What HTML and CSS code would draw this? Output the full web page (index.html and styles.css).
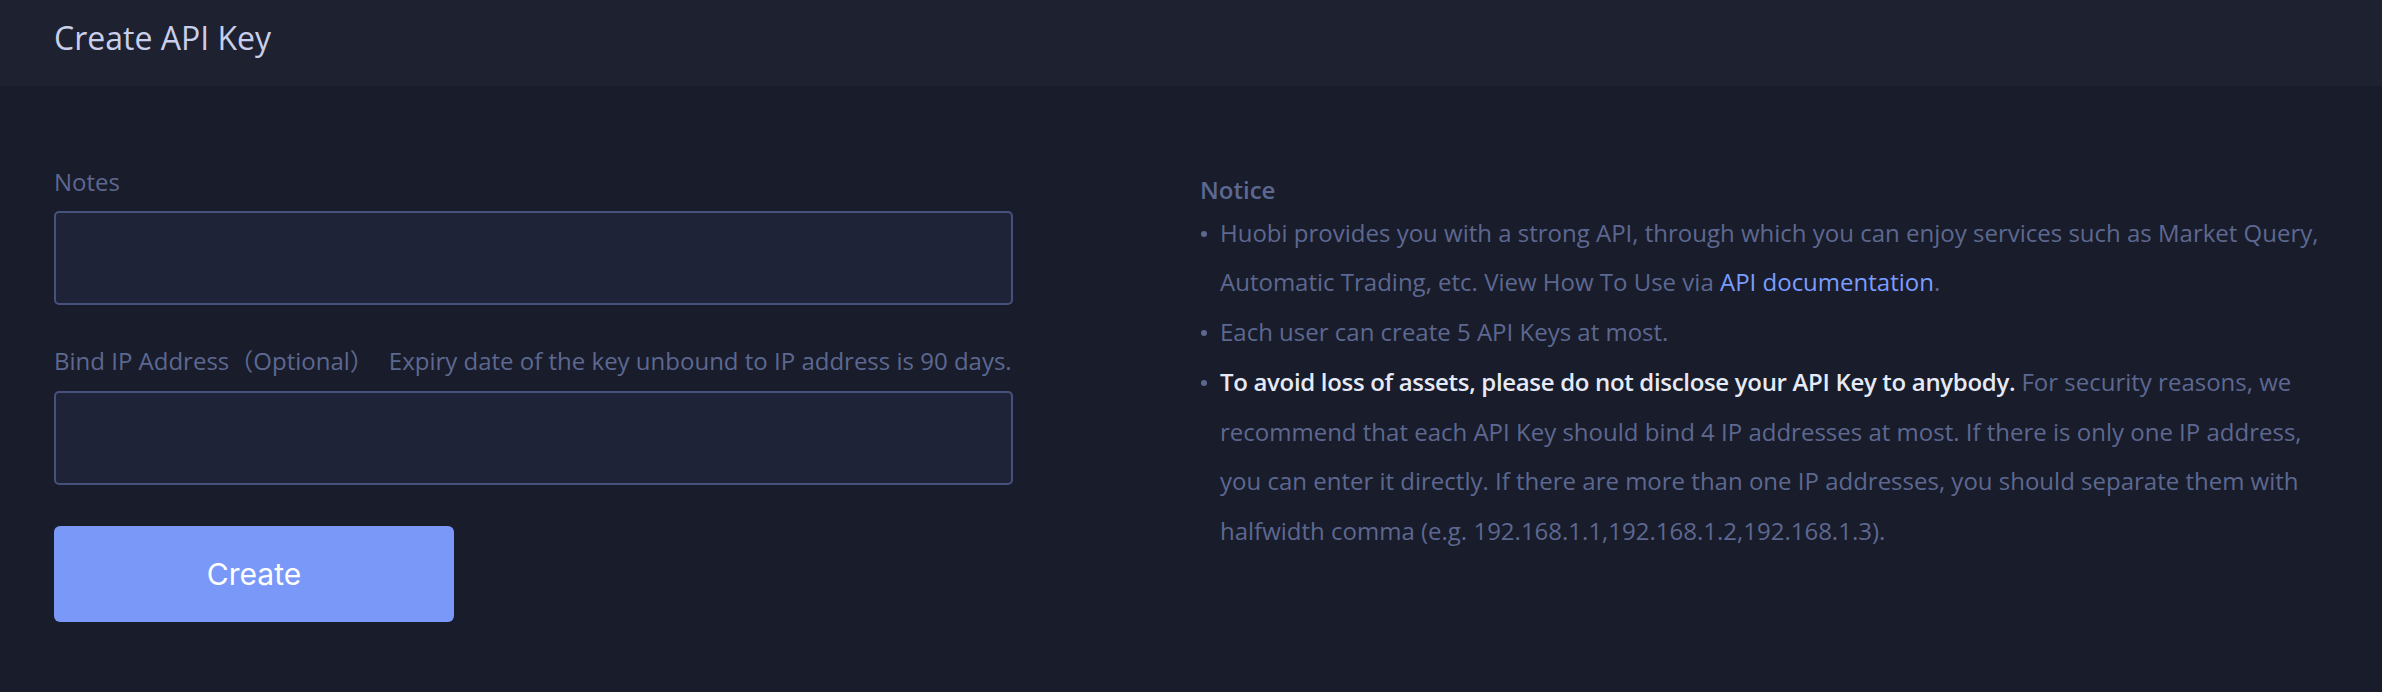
FILE: index.html
```html
<!DOCTYPE html>
<html lang="en">
<head>
<meta charset="utf-8">
<title>Create API Key</title>
<link rel="stylesheet" href="styles.css">
</head>
<body>
<header class="page-header">
  <h1 class="page-title">Create API Key</h1>
</header>
<main class="content">
  <form class="form-col">
    <label class="field-label" for="notes">Notes</label>
    <input class="field-input" id="notes" type="text">
    <label class="field-label field-label--ip" for="ip">Bind IP Address（Optional）<span class="field-hint">Expiry date of the key unbound to IP address is 90 days.</span></label>
    <input class="field-input" id="ip" type="text">
    <button class="btn-create" type="button">Create</button>
  </form>
  <section class="notice">
    <h2 class="notice-title">Notice</h2>
    <ul class="notice-list">
      <li class="notice-item">Huobi provides you with a strong API, through which you can enjoy services such as Market Query, Automatic Trading, etc. View How To Use via <a class="notice-link" href="#">API documentation</a>.</li>
      <li class="notice-item">Each user can create 5 API Keys at most.</li>
      <li class="notice-item"><strong class="notice-strong">To avoid loss of assets, please do not disclose your API Key to anybody.</strong> For security reasons, we recommend that each API Key should bind 4 IP addresses at most. If there is only one IP address, you can enter it directly. If there are more than one IP addresses, you should separate them with halfwidth comma (e.g. 192.168.1.1,192.168.1.2,192.168.1.3).</li>
    </ul>
  </section>
</main>
</body>
</html>
```
FILE: styles.css
```css
* { box-sizing: border-box; }

html, body {
  margin: 0;
  padding: 0;
  background: #191c2a;
  height: 100%;
}

body {
  font-family: "Open Sans", "Noto Sans", "Noto Sans CJK SC", sans-serif;
  color: #5d6891;
  font-size: 24px;
}

.page-header {
  height: 86px;
  background: #1e2130;
  padding: 16px 54px 0;
}

.page-title {
  margin: 0;
  font-size: 32px;
  line-height: 44px;
  font-weight: 400;
  color: #c9cfea;
}

.content {
  display: grid;
  grid-template-columns: 1146px 1fr;
  padding: 79.5px 54px 0;
}

.form-col {
  display: flex;
  flex-direction: column;
  align-items: flex-start;
  width: 959px;
}

.field-label {
  display: block;
  line-height: 32px;
  margin-bottom: 13px;
  white-space: nowrap;
}

.field-label--ip {
  margin-top: 40px;
  margin-bottom: 14px;
}

.field-hint {
  margin-left: 15px;
}

.field-input {
  width: 959px;
  height: 94px;
  background: #1f2337;
  border: 2px solid #47527c;
  border-radius: 5px;
  outline: none;
  color: #c9cfea;
  font: inherit;
  padding: 0 20px;
}

.btn-create {
  margin-top: 41px;
  width: 400px;
  height: 96px;
  background: #7a98f8;
  border: none;
  border-radius: 6px;
  color: #ffffff;
  font-family: "Inter", "Liberation Sans", sans-serif;
  font-size: 30px;
  font-weight: 400;
  cursor: pointer;
}

.notice {
  width: 1130px;
}

.notice-title {
  margin: 8.5px 0 0;
  font-size: 24px;
  line-height: 32px;
  font-weight: 600;
  color: #5d6891;
}

.notice-list {
  list-style: none;
  margin: 1.5px 0 0;
  padding: 0;
}

.notice-item {
  position: relative;
  padding-left: 20px;
  line-height: 49.8px;
}

.notice-item::before {
  content: "";
  position: absolute;
  left: 1px;
  top: 23px;
  width: 6px;
  height: 6px;
  border-radius: 50%;
  background: #5d6891;
}

.notice-link {
  color: #7b9cff;
  text-decoration: none;
}

.notice-strong {
  font-weight: 600;
  letter-spacing: -0.32px;
  color: #e6eaf7;
}
```
